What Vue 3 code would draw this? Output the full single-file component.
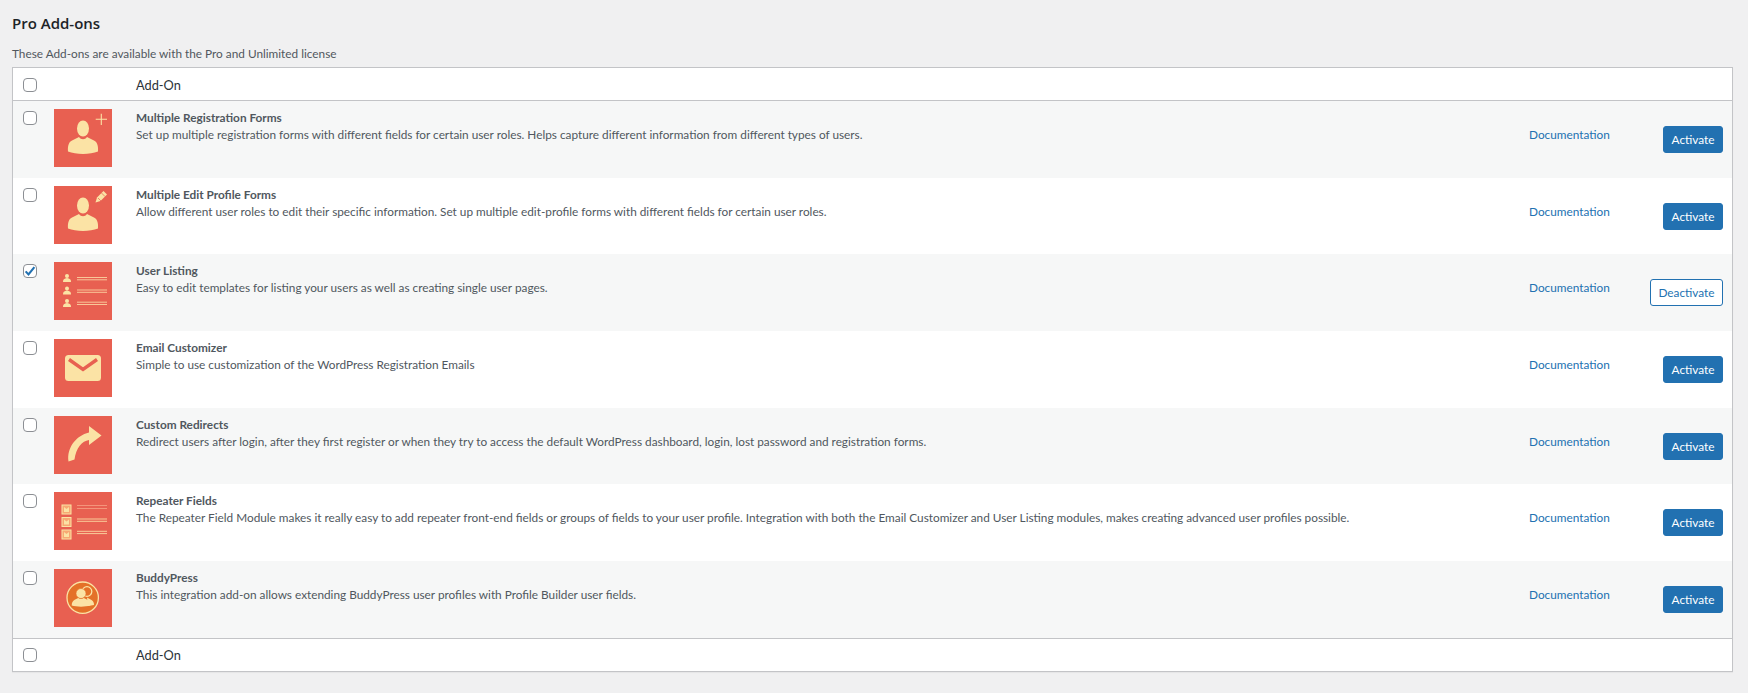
<script setup>
const addons = [
  { name: 'Multiple Registration Forms', icon: 'add', desc: 'Set up multiple registration forms with different fields for certain user roles. Helps capture different information from different types of users.' },
  { name: 'Multiple Edit Profile Forms', icon: 'edit', desc: 'Allow different user roles to edit their specific information. Set up multiple edit-profile forms with different fields for certain user roles.' },
  { name: 'User Listing', icon: 'list', checked: true, active: true, desc: 'Easy to edit templates for listing your users as well as creating single user pages.' },
  { name: 'Email Customizer', icon: 'mail', desc: 'Simple to use customization of the WordPress Registration Emails' },
  { name: 'Custom Redirects', icon: 'redirect', desc: 'Redirect users after login, after they first register or when they try to access the default WordPress dashboard, login, lost password and registration forms.' },
  { name: 'Repeater Fields', icon: 'repeater', desc: 'The Repeater Field Module makes it really easy to add repeater front-end fields or groups of fields to your user profile. Integration with both the Email Customizer and User Listing modules, makes creating advanced user profiles possible.' },
  { name: 'BuddyPress', icon: 'buddy', desc: 'This integration add-on allows extending BuddyPress user profiles with Profile Builder user fields.' },
]
const listY = [12, 24.5, 37]
const lineY = [[15.5, 17.8], [28, 30.3], [40.2, 42.5]]
const boxY = [13, 25.5, 38]
const repLineY = [[13.5, 16.5], [27, 29.3], [39.3, 41.6]]
</script>

<template>
  <div class="page">
    <h2 class="title">Pro Add-ons</h2>
    <p class="lead">These Add-ons are available with the Pro and Unlimited license</p>
    <div class="table">
      <div class="head top">
        <span class="box"></span>
        <span class="head-label">Add-On</span>
      </div>
      <div v-for="a in addons" :key="a.name" class="row">
        <span class="box" :class="{ on: a.checked }">
          <svg v-if="a.checked" viewBox="0 0 16 16" class="tick"><path d="M3 8.4 6.3 12 13 3.6" fill="none" stroke="#2271b1" stroke-width="2.4"/></svg>
        </span>
        <svg class="thumb" viewBox="0 0 58 58">
          <rect width="58" height="58" fill="#e86051"/>
          <g v-if="a.icon === 'add' || a.icon === 'edit'" fill="#fbe3a5">
            <ellipse cx="29" cy="19.5" rx="6" ry="8"/>
            <path d="M14 42.5C13.5 36 15 32.5 19 31L25 28C27 31 31 31 33 28L39 31C43 32.5 44.5 36 44 42.5C36 45.8 22 45.8 14 42.5Z"/>
          </g>
          <path v-if="a.icon === 'add'" d="M47.3 4.7V16M41.7 10.3H53" stroke="#fbe3a5" stroke-width="1.1" fill="none"/>
          <g v-if="a.icon === 'edit'">
            <path d="M41.5 16.5 43 11.5 49.5 5 53 8.5 46.5 15Z" fill="#fbe3a5"/>
            <path d="M44 12 47.5 15.5M47.5 7 51 10.500" stroke="#e86051" stroke-width=".7"/>
          </g>
          <g v-if="a.icon === 'list'">
            <g v-for="(y, i) in listY" :key="y" fill="#fbe3a5">
              <circle cx="13" :cy="y + 2" r="2"/>
              <path :d="`M9 ${y + 8}c0-2.600 1-3.500 4-4 3 .5 4 1.400 4 4z`"/>
              <path :d="`M23 ${lineY[i][0]}H53M23 ${lineY[i][1]}H53`" stroke="#fbd3a0" stroke-width=".9" fill="none"/>
            </g>
          </g>
          <g v-if="a.icon === 'mail'">
            <rect x="11" y="16" width="36" height="26" rx="3.500" fill="#fbe3a5"/>
            <path d="M15 20.500 29 30.500 43 20.500" fill="none" stroke="#e86051" stroke-width="3.400"/>
          </g>
          <path v-if="a.icon === 'redirect'" d="M14.500 45.500C12.500 32 22 19.500 35 16.500V10L47.500 19.500 35 29V24C28 25 22 32 20.500 43.500Z" fill="#fbe3a5"/>
          <g v-if="a.icon === 'repeater'">
            <g v-for="(y, i) in boxY" :key="y">
              <rect x="8" :y="y" width="9" height="9" fill="#f7a873" stroke="#fbe3a5" stroke-width="1"/>
              <path :d="`M10 ${y + 7}V${y + 2}l2.500 2 2.500-2V${y + 7}z`" fill="#fbe3a5"/>
              <path :d="`M23 ${repLineY[i][0]}H53M23 ${repLineY[i][1]}H53`" :stroke="i === 0 ? '#f59a80' : '#fbd9a3'" stroke-width=".9" fill="none"/>
            </g>
          </g>
          <g v-if="a.icon === 'buddy'">
            <circle cx="28.700" cy="28.700" r="15.700" fill="#e47128" stroke="#fbe3a5" stroke-width="1.300"/>
            <circle cx="33" cy="22.500" r="4.800" fill="#e47128" stroke="#fbe3a5" stroke-width="1.300"/>
            <path d="M33 28.500l4.500 2.500c2 1 2.500 3 2.500 5l-6 1z" fill="#fbe3a5"/>
            <circle cx="27" cy="24.500" r="5" fill="#fbe3a5" stroke="#e47128" stroke-width=".6"/>
            <path d="M17.700 36.500c0-3 1-4.800 3-5.800l3.500-1.700c1.500 1.400 4.100 1.400 5.600 0l3.500 1.700c2 1 3 2.800 3 5.800-5 1.500-13.600 1.500-18.600 0z" fill="#fbe3a5"/>
          </g>
        </svg>
        <div class="info">
          <div class="name">{{ a.name }}</div>
          <div class="desc">{{ a.desc }}</div>
        </div>
        <a class="doc">Documentation</a>
        <div class="action">
          <button class="btn" :class="a.active ? 'outline' : 'solid'">{{ a.active ? 'Deactivate' : 'Activate' }}</button>
        </div>
      </div>
      <div class="head foot">
        <span class="box"></span>
        <span class="head-label">Add-On</span>
      </div>
    </div>
  </div>
</template>

<style>
html, body { margin: 0; background: #f0f0f1; }
</style>

<style scoped>
.page {
  box-sizing: border-box;
  height: 693px;
  padding: 14px 15px 0 12px;
  font-family: Lato, "Liberation Sans", sans-serif;
  font-size: 11.8px;
  color: #3c434a;
  overflow: hidden;
}
.title {
  margin: 0;
  font-family: "Open Sans", "Liberation Sans", sans-serif;
  font-size: 15px;
  line-height: 18px;
  font-weight: 600;
  color: #1d2327;
}
.lead {
  margin: 13px 0 0;
  line-height: 17px;
  color: #50575e;
}
.table {
  box-sizing: border-box;
  margin-top: 5px;
  background: #fff;
  border: 1px solid #c3c4c7;
  box-shadow: 0 1px 1px rgba(0, 0, 0, .04);
}
.head {
  display: flex;
  align-items: center;
  height: 32px;
  padding-left: 10px;
  border-bottom: 1px solid #c3c4c7;
  box-sizing: content-box;
}
.top {
  height: 31px;
  padding-top: 1px;
}
.foot {
  border-bottom: 0;
  border-top: 1px solid #c3c4c7;
  height: 32px;
}
.head-label {
  margin-left: 99px;
  font-size: 12.8px;
  color: #2c3338;
}
.box {
  flex: none;
  box-sizing: border-box;
  display: block;
  width: 14px;
  height: 14px;
  background: #fff;
  border: 1px solid #8c8f94;
  border-radius: 4px;
}
.tick { display: block; width: 14px; height: 14px; margin: -1px; }
.row {
  box-sizing: border-box;
  display: flex;
  align-items: flex-start;
  height: 76.7px;
  padding-left: 10px;
}
.row:nth-of-type(even) { background: #f6f7f7; }
.row .box { margin-top: 10px; }
.thumb {
  flex: none;
  width: 58px;
  height: 58px;
  margin: 8px 0 0 17px;
}
.info {
  flex: 1;
  min-width: 0;
  margin: 8px 0 0 24px;
  line-height: 17px;
}
.name { font-weight: 700; color: #50575e; }
.desc { color: #50575e; }
.doc {
  flex: none;
  width: 123px;
  margin-top: 25px;
  line-height: 17px;
  color: #2271b1;
}
.action {
  flex: none;
  width: 80px;
  display: flex;
  justify-content: flex-end;
  padding-right: 9px;
  margin-top: 25px;
  box-sizing: border-box;
}
.btn {
  box-sizing: border-box;
  height: 27px;
  padding: 0 7.5px;
  border-radius: 3px;
  border: 1px solid #2271b1;
  font: inherit;
  line-height: 25px;
}
.solid { background: #2271b1; color: #fff; }
.outline { background: #fff; color: #2271b1; }
</style>
